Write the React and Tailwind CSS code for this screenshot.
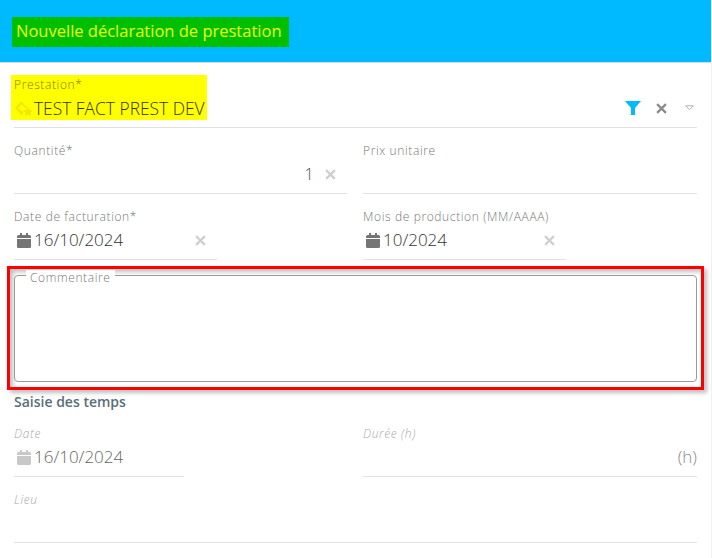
import React from 'react';

const CalendarIcon = ({ className }) => (
  <svg viewBox="0 0 14 15" className={className} fill="currentColor">
    <path d="M3 0h2v2h4V0h2v2h1.500A1.500 1.500 0 0 1 14 3.500V5H0V3.500A1.500 1.500 0 0 1 1.500 2H3z" />
    <path d="M0 6h14v7.500a1.500 1.500 0 0 1-1.500 1.500h-11A1.500 1.500 0 0 1 0 13.500z" />
  </svg>
);

const CloseIcon = ({ className }) => (
  <svg viewBox="0 0 10 10" className={className} fill="none" stroke="currentColor" strokeWidth="2">
    <path d="M1 1l8 8M9 1l-8 8" />
  </svg>
);

const Field = ({ label, width, muted, children }) => (
  <div className={`${width} h-[66px] border-b border-[#e2e2e2] pt-[15px] flex flex-col`}>
    <div className={`h-[19px] text-[12px] leading-[16px] tracking-[0.62px] ${muted ? 'italic font-light text-[#a8a8a8]' : 'font-light text-[#777]'}`}>
      {label}
    </div>
    <div className="flex items-center h-[24px]">{children}</div>
  </div>
);

const DateValue = ({ value, muted }) => (
  <>
    <CalendarIcon className={`ml-[3px] w-[14px] h-[15px] ${muted ? 'text-[#c8c8c8]' : 'text-[#757575]'}`} />
    <span className={`ml-[3px] text-[17px] leading-[24px] font-light ${muted ? 'text-[#666]' : 'text-[#333]'}`}>{value}</span>
  </>
);

export default function App() {
  return (
    <div className="w-[712px] h-[558px] overflow-hidden bg-white border-r border-[#f0f0f0] font-['Open_Sans',sans-serif]">
      <header className="h-[63px] bg-[#00baff] border-b border-[#d9d9d9] pt-[17px] pl-[12px]">
        <div className="w-[277px] h-[30px] bg-[#00bf00] pl-[4px] text-[16.5px] leading-[28px] text-[#eeff00] whitespace-nowrap">
          Nouvelle déclaration de prestation
        </div>
      </header>

      <main className="pl-[14px] pr-[14px] pt-[12px]">
        <div className="relative h-[53px] border-b border-[#e2e2e2]">
          <div className="absolute left-[-3px] top-0 w-[196px] h-[45px] bg-[#ffff00] pl-[3px] pt-[2px]">
            <div className="text-[12px] leading-[16px] tracking-[0.62px] font-light text-[#808000]">Prestation*</div>
            <div className="flex items-center h-[24px] mt-[3px]">
              <svg viewBox="0 0 20 17" className="w-[20px] h-[17px] text-[#f2e600]" fill="currentColor">
                <path d="M7 1.500L1 8l6 6.500h2V12L4 8l3.500-4 4 4h2z" />
                <path d="M14 7l1.500 3 3.500.400-2.600 2.300.800 3.300-3.200-1.800-3.200 1.800.800-3.300L9 10.400l3.500-.400z" />
              </svg>
              <span className="text-[17.4px] leading-[24px] font-light text-[#333300] whitespace-nowrap">TEST FACT PREST DEV</span>
            </div>
          </div>
          <div className="absolute right-0 top-[26px] flex items-center">
            <svg viewBox="0 0 16 14" className="w-[16px] h-[14px] text-[#00baff]" fill="currentColor">
              <path d="M0 0h16L10 7v7H6V7z" />
            </svg>
            <CloseIcon className="ml-[15px] w-[11px] h-[11px] text-[#8a8a8a]" />
            <svg viewBox="0 0 10 6" className="ml-[18px] mr-[3px] w-[9px] h-[6px] text-[#aaa]" fill="none" stroke="currentColor">
              <path d="M.800.500h8.400L5 5z" />
            </svg>
          </div>
        </div>

        <div className="flex gap-[16px]">
          <Field label="Quantité*" width="w-[333px]">
            <span className="ml-auto text-[17px] font-light text-[#555]">1</span>
            <CloseIcon className="ml-[11px] mr-[11px] w-[11px] h-[11px] text-[#cfcfcf]" />
          </Field>
          <Field label="Prix unitaire" width="w-[334px]" />
        </div>

        <div className="flex gap-[146px]">
          <Field label="Date de facturation*" width="w-[203px]">
            <DateValue value="16/10/2024" />
            <CloseIcon className="ml-auto mr-[11px] w-[11px] h-[11px] text-[#cfcfcf]" />
          </Field>
          <Field label="Mois de production (MM/AAAA)" width="w-[203px]">
            <DateValue value="10/2024" />
            <CloseIcon className="ml-auto mr-[11px] w-[11px] h-[11px] text-[#cfcfcf]" />
          </Field>
        </div>

        <div className="mt-[6px] ml-[-7px] w-[697px] h-[124px] border-[3px] border-[#ff0000] shadow-[3px_3px_4px_rgba(0,0,0,0.25),inset_3px_3px_4px_rgba(0,0,0,0.25)] px-[4px] pt-[6px]">
          <div className="relative h-[107px] border border-[#9a9a9a] rounded-[4px] bg-white">
            <span className="absolute left-[11px] top-[-6px] bg-white px-[4px] text-[12px] leading-[16px] tracking-[0.62px] font-light text-[#777]">Commentaire</span>
          </div>
        </div>

        <h2 className="mt-[2px] h-[19px] text-[14px] leading-[20px] font-semibold text-[#5a6e78]">Saisie des temps</h2>

        <div className="flex gap-[179px]">
          <Field label="Date" width="w-[170px]" muted>
            <DateValue value="16/10/2024" muted />
          </Field>
          <Field label="Durée (h)" width="w-[334px]" muted>
            <span className="ml-auto text-[17px] font-light text-[#888]">(h)</span>
          </Field>
        </div>

        <Field label="Lieu" width="w-full" muted />
      </main>
    </div>
  );
}
